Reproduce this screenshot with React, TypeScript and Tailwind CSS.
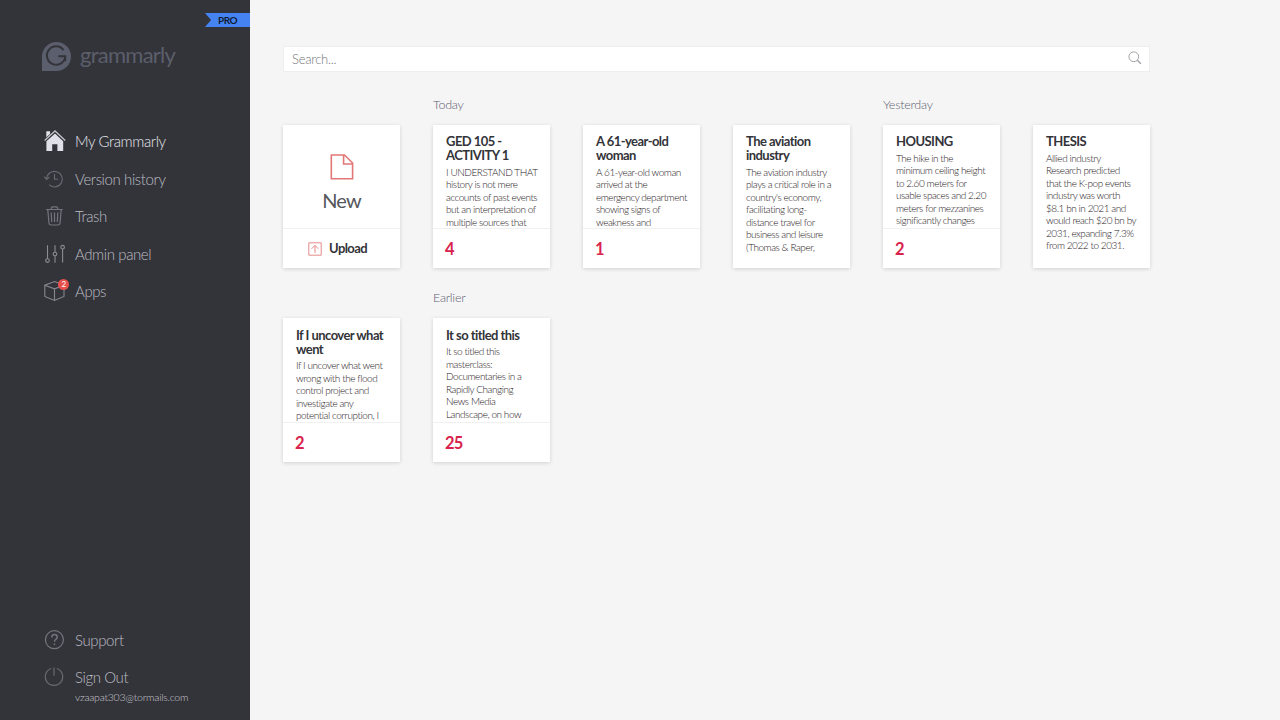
import React from "react";

type Doc = {
  title: string;
  text: string;
  alerts?: number;
  group?: string;
};

const docs: Doc[] = [
  {
    group: "Today",
    title: "GED 105 -\nACTIVITY 1",
    text: "I UNDERSTAND THAT\nhistory is not mere\naccounts of past events\nbut an interpretation of\nmultiple sources that",
    alerts: 4,
  },
  {
    title: "A 61-year-old\nwoman",
    text: "A 61-year-old woman\narrived at the\nemergency department\nshowing signs of\nweakness and",
    alerts: 1,
  },
  {
    title: "The aviation\nindustry",
    text: "The aviation industry\nplays a critical role in a\ncountry's economy,\nfacilitating long-\ndistance travel for\nbusiness and leisure\n(Thomas & Raper,",
  },
  {
    group: "Yesterday",
    title: "HOUSING",
    text: "The hike in the\nminimum ceiling height\nto 2.60 meters for\nusable spaces and 2.20\nmeters for mezzanines\nsignificantly changes",
    alerts: 2,
  },
  {
    title: "THESIS",
    text: "Allied industry\nResearch predicted\nthat the K-pop events\nindustry was worth\n$8.1 bn in 2021 and\nwould reach $20 bn by\n2031, expanding 7.3%\nfrom 2022 to 2031.",
  },
  {
    title: "If I uncover what\nwent",
    text: "If I uncover what went\nwrong with the flood\ncontrol project and\ninvestigate any\npotential corruption, I",
    alerts: 2,
  },
  {
    group: "Earlier",
    title: "It so titled this",
    text: "It so titled this\nmasterclass:\nDocumentaries in a\nRapidly Changing\nNews Media\nLandscape, on how",
    alerts: 25,
  },
];

const iconClass = "w-[22px] h-[22px] shrink-0";

const HomeIcon = () => (
  <svg viewBox="0 0 22 22" className={iconClass} fill="#e0e1e8">
    <path d="M2.3 1.2h3.8v3.2L2.3 7.8z" />
    <path d="M11 3.4 2.4 11.2V21h5.8v-6.8h5.2V21h5.8v-9.8z" />
    <path d="M.6 10.6 11 1.2 21.2 10.6" fill="none" stroke="#33343a" strokeWidth="2.6" />
    <path d="M.6 10.4 11 .9 21.2 10.4" fill="none" stroke="#c2c3ca" strokeWidth="1.3" />
  </svg>
);

const HistoryIcon = () => (
  <svg viewBox="0 0 22 22" className={iconClass} fill="none" stroke="#686a74" strokeWidth="1.1">
    <path d="M2.7 10.8A7.8 7.8 0 1 1 5 16.7" />
    <path d="M.2 8.6 2.7 11.4 5.4 8.8M10.5 6v5.2h3.7" />
  </svg>
);

const TrashIcon = () => (
  <svg viewBox="0 0 22 22" className={iconClass} fill="none" stroke="#74767f" strokeWidth="1.2">
    <path d="M2.2 4.5h16.6M7.3 4.3V3q0-1.2 1.2-1.2h4Q13.7 1.8 13.7 3v1.3" />
    <path d="M3.8 5 5 18.2q.2 1.8 2 1.8h7q1.8 0 2-1.8L17.2 5M7.2 7.5l.5 9.4M10.5 7.5v9.4M13.8 7.5l-.5 9.4" />
  </svg>
);

const SlidersIcon = () => (
  <svg viewBox="0 0 22 22" className={iconClass} fill="none" stroke="#8a8c94" strokeWidth="1.1">
    <path d="M3.5 2.2v13.6M11 2.2v7M11 12.7v7M18.6 6v13.4" />
    <circle cx="3.5" cy="17.6" r="1.8" />
    <circle cx="11" cy="11" r="1.8" />
    <circle cx="18.6" cy="4.2" r="1.8" />
  </svg>
);

const BoxIcon = () => (
  <svg viewBox="0 0 22 22" className={iconClass} fill="none" stroke="#85878f" strokeWidth="1.1">
    <path d="M10.5 1.5 20 5.2v11.2l-9.5 4.1L.8 16.4V5.2zM.8 5.2l9.7 3.6L20 5.2M10.5 8.8v11.7" />
  </svg>
);

const HelpIcon = () => (
  <svg viewBox="0 0 22 22" className={iconClass} fill="none" stroke="#74767f" strokeWidth="1.2">
    <circle cx="10.4" cy="10.7" r="9" />
    <path d="M7.8 8.4q0-2.8 2.7-2.8t2.7 2.5q0 1.5-1.5 2.4-1.2.8-1.2 2.3M10.5 14.4v1.5" strokeWidth="1.5" />
  </svg>
);

const PowerIcon = () => (
  <svg viewBox="0 0 22 22" className={iconClass} fill="none" stroke="#686a72" strokeWidth="1.2">
    <path d="M7.2 2.5a8.7 8.7 0 1 0 5.6 0M10 1.5v8.3" />
  </svg>
);

const Logo = () => (
  <div className="flex items-center h-[30px] pl-[42px] mt-[41px]">
    <svg viewBox="0 0 29 29" className="w-[29px] h-[29px]">
      <path d="M0 29V14.5A14.5 14.5 0 1 1 14.5 29z" fill="#5b5e6d" />
      <path
        d="M21.6 8.2A9.2 9.2 0 1 0 23.3 14.2H16.4M23.2 14.2v5"
        fill="none"
        stroke="#33343a"
        strokeWidth="2"
      />
    </svg>
    <span className="ml-[9px] -mt-[2px] text-[22px] leading-[30px] tracking-[-0.75px] text-[#5b5e6b]">
      grammarly
    </span>
  </div>
);

type NavItemProps = {
  icon: React.ReactNode;
  label: string;
  active?: boolean;
  badge?: number;
};

const NavItem: React.FC<NavItemProps> = ({ icon, label, active, badge }) => (
  <li className="flex items-center h-[37.5px]">
    <span className="relative mr-[9px]">
      {icon}
      {badge && (
        <span className="absolute -top-[1px] left-[14px] w-[11px] h-[11px] rounded-full bg-[#e8504d] text-white text-[8px] leading-[11px] text-center font-normal">
          {badge}
        </span>
      )}
    </span>
    <span className={active ? "text-[#e6e7ec]" : "text-[#bcbdc3]"}>{label}</span>
  </li>
);

const Sidebar = () => (
  <aside className="flex flex-col w-[250px] h-full bg-[#33343a] shrink-0">
    <div className="flex justify-end h-0">
      <div className="mt-[13px] w-[45px] h-[14px] pl-[13px] bg-[#4583f2] text-[#101b34] text-[10px] leading-[15px] font-bold tracking-[-0.5px] [clip-path:polygon(0_0,100%_0,100%_100%,0_100%,6px_50%)]">
        PRO
      </div>
    </div>
    <Logo />
    <ul className="mt-[51.5px] pl-[44px] text-[15px] font-light tracking-[-0.4px]">
      <NavItem icon={<HomeIcon />} label="My Grammarly" active />
      <NavItem icon={<HistoryIcon />} label="Version history" />
      <NavItem icon={<TrashIcon />} label="Trash" />
      <NavItem icon={<SlidersIcon />} label="Admin panel" />
      <NavItem icon={<BoxIcon />} label="Apps" badge={2} />
    </ul>
    <div className="mt-auto pl-[44px] pb-4 font-light">
      <ul className="text-[15px] tracking-[-0.4px]">
        <NavItem icon={<HelpIcon />} label="Support" />
        <NavItem icon={<PowerIcon />} label="Sign Out" />
      </ul>
      <p className="pl-[31px] -mt-[6px] h-[14px] text-[10.5px] leading-[14px] tracking-[-0.25px] text-[#c8c9ce]">
        vzaapat303@tormails.com
      </p>
    </div>
  </aside>
);

const cardClass =
  "flex flex-col w-[117px] h-[143.5px] bg-white shadow-[0_1px_4px_rgba(0,0,0,0.15)]";

const NewCard = () => (
  <div>
    <div className="h-[31px]" />
    <div className={cardClass}>
      <div className="flex flex-col items-center flex-1 pt-[29px]">
        <svg viewBox="0 0 24 26" className="w-6 h-[26px]" fill="none" stroke="#e27777" strokeWidth="1.6">
          <path d="M1.3 1h13.2L22.6 9v15.8H1.3zM13.6 1v9h9" />
        </svg>
        <span className="mt-2 text-[20px] leading-6 tracking-[-0.8px] text-[#55575c]">New</span>
      </div>
      <div className="flex items-center justify-center h-10 border-t border-[#f0f0f0]">
        <svg viewBox="0 0 14 14" className="w-[14px] h-[14px] mr-[7px]" fill="none" stroke="#e58b8b" strokeWidth="1">
          <path d="M.8.8h12.4v12.4H.8zM7 11V3.5M3.6 6.8 7 3.4l3.4 3.4" />
        </svg>
        <span className="mr-2 text-[13px] font-bold text-[#333439] tracking-[-0.6px]">Upload</span>
      </div>
    </div>
  </div>
);

const DocCard: React.FC<{ doc: Doc }> = ({ doc }) => (
  <div>
    <h2 className="h-[31px] text-[12.5px] leading-[22px] tracking-[-0.25px] text-[#5c6070] font-light">{doc.group}</h2>
    <div className={cardClass}>
      <div className="flex-1 pt-[9.5px] pl-[13px] overflow-hidden whitespace-pre">
        <h3 className="text-[13px] leading-[14px] font-bold tracking-[-0.55px] text-[#333439]">
          {doc.title}
        </h3>
        <p className="mt-[3.5px] text-[10px] leading-[12.5px] font-light tracking-[-0.45px] text-[#1f2025]">{doc.text}</p>
      </div>
      {doc.alerts && (
        <div className="flex items-center h-10 pt-[2px] pl-3 border-t border-[#f0f0f0] shrink-0 text-[16.5px] font-bold tracking-[-0.8px] text-[#d9234c]">
          {doc.alerts}
        </div>
      )}
    </div>
  </div>
);

const App: React.FC = () => {
  return (
    <div className="flex w-full h-[720px] overflow-hidden bg-[#f5f5f5] font-['Lato',sans-serif]">
      <Sidebar />
      <main className="pt-[46px] pl-[33px]">
        <div className="flex items-center justify-between w-[867px] h-[26px] pl-2 pr-[7px] bg-white border border-[#eeeeee]">
          <span className="pt-px text-[13px] font-light tracking-[-0.25px] text-[#74757a]">Search...</span>
          <svg viewBox="0 0 14 14" className="w-[14px] h-[14px] -mt-[2px]" fill="none" stroke="#a3a4a8">
            <circle cx="5.8" cy="5.8" r="4.9" />
            <path d="m9.3 9.3 3.6 3.4" strokeWidth="1.5" />
          </svg>
        </div>
        <div className="grid grid-cols-[repeat(6,117px)] gap-x-[33px] gap-y-[19px] mt-[21.5px]">
          <NewCard />
          {docs.map((doc) => (
            <DocCard key={doc.title} doc={doc} />
          ))}
        </div>
      </main>
    </div>
  );
};

export default App;
